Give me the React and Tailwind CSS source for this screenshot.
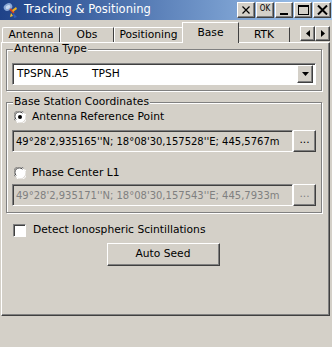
import React from "react";

const raised = "bg-[#d4d0c8] border border-t-white border-l-white border-r-[#404040] border-b-[#404040] shadow-[inset_-1px_-1px_0_#808080]";
const sunken = "border border-t-[#808080] border-l-[#808080] border-r-white border-b-white shadow-[inset_1px_1px_0_#404040]";

function TitleBtn({ children }) {
  return (
    <div className={`${raised} w-[18px] h-[16px] flex items-center justify-center text-black`}>
      {children}
    </div>
  );
}

function Radio({ checked }) {
  return (
    <svg width="12" height="12" viewBox="0 0 12 12" className="shrink-0">
      <circle cx="6" cy="6" r="5.5" fill="#fff" />
      <path d="M1.2 9.5 A5.5 5.5 0 0 1 9.5 1.2" stroke="#808080" strokeWidth="1" fill="none" />
      <path d="M2.2 8.5 A4.3 4.3 0 0 1 8.5 2.2" stroke="#404040" strokeWidth="1" fill="none" />
      <path d="M10.8 2.5 A5.5 5.5 0 0 1 2.5 10.8" stroke="#ffffff" strokeWidth="1" fill="none" />
      {checked && <circle cx="6" cy="6" r="2" fill="#000" />}
    </svg>
  );
}

function Group({ label, className, children }) {
  return (
    <div className={`relative border border-[#808080] shadow-[inset_1px_1px_0_#fff,1px_1px_0_#fff] ${className}`}>
      <div className="absolute left-[6px] top-[-7px] bg-[#d4d0c8] leading-[12px] px-[1px]">{label}</div>
      {children}
    </div>
  );
}

export default function App() {
  return (
    <div className="w-[332px] h-[347px] bg-[#d4d0c8] font-['DejaVu_Sans',sans-serif] text-[10.7px] text-black overflow-hidden flex flex-col">
      {/* Title bar */}
      <div className="h-[20px] flex items-center bg-gradient-to-r from-[#1f4288] to-[#a6caf0] pl-[2px] pr-[1px]">
        <svg width="18" height="18" viewBox="0 0 18 18" className="shrink-0">
          <ellipse cx="6" cy="6" rx="4.5" ry="3.5" fill="#8aa8d8" transform="rotate(-30 6 6)" />
          <ellipse cx="6" cy="6" rx="2.5" ry="1.8" fill="#c8d8f0" transform="rotate(-30 6 6)" />
          <path d="M8 8 L12 12" stroke="#d04020" strokeWidth="2" />
          <path d="M10 9 L14 6 L15 8 L11 11 Z" fill="#f0b020" />
          <path d="M9 12 L11 15 L8 16 Z" fill="#f0c030" />
          <path d="M11 12 L15 16 L12 17 Z" fill="#3060c0" />
        </svg>
        <span className="ml-[4px] text-white text-[11.5px] leading-none">Tracking &amp; Positioning</span>
        <div className="ml-auto flex gap-[1px]">
          <TitleBtn>
            <svg width="10" height="8" viewBox="0 0 10 8"><path d="M1.5 0.5 L8.5 7.5 M8.5 0.5 L1.5 7.5" stroke="#000" strokeWidth="1.2" /></svg>
          </TitleBtn>
          <TitleBtn>
            <span className="text-[8px] leading-none font-['DejaVu_Sans_Condensed',sans-serif] -mt-[3px]">OK</span>
          </TitleBtn>
          <TitleBtn>
            <div className="w-[8px] h-[2px] bg-black mt-[8px]" />
          </TitleBtn>
          <TitleBtn>
            <div className="w-[11px] h-[10px] border border-black border-t-2" />
          </TitleBtn>
          <TitleBtn>
            <svg width="11" height="10" viewBox="0 0 11 10"><path d="M1 0.5 L10 9.5 M10 0.5 L1 9.5" stroke="#000" strokeWidth="2" /></svg>
          </TitleBtn>
        </div>
      </div>

      {/* Tabs */}
      <div className="mt-[2px] h-[20px] flex items-end pl-[2px] relative z-10">
        <div className="w-[58px] h-[15px] border-t border-l border-white border-r border-r-[#404040] flex items-center justify-center rounded-tl-[2px]">Antenna</div>
        <div className="w-[54px] h-[15px] border-t border-l border-white border-r border-r-[#404040] flex items-center justify-center">Obs</div>
        <div className="w-[68px] h-[15px] border-t border-l border-white flex items-center justify-center">Positioning</div>
        <div className="w-[57px] h-[21px] -mb-[1px] bg-[#d4d0c8] border-t border-l border-white border-r border-r-[#404040] flex items-start justify-center pt-[2px]">Base</div>
        <div className="w-[51px] h-[15px] border-t border-white border-r border-r-[#404040] flex items-center justify-center">RTK</div>
        <div className="ml-auto mr-[2px] flex self-start mt-[4px]">
          <div className={`${raised} w-[15px] h-[15px] flex items-center justify-center`}>
            <svg width="4" height="7" viewBox="0 0 4 7"><path d="M4 0 L0 3.5 L4 7 Z" fill="#000" /></svg>
          </div>
          <div className={`${raised} w-[15px] h-[15px] flex items-center justify-center`}>
            <svg width="4" height="7" viewBox="0 0 4 7"><path d="M0 0 L4 3.5 L0 7 Z" fill="#000" /></svg>
          </div>
        </div>
      </div>

      {/* Panel */}
      <div className="ml-[1px] w-[329px] h-[274px] border border-t-white border-l-white border-r-[#404040] border-b-[#404040] shadow-[inset_-1px_-1px_0_#808080] flex flex-col pl-[4px] pr-[7px]">
        <Group label="Antenna Type" className="mt-[6px] h-[42px] px-[5px] pt-[13px]">
          <div className={`${sunken} bg-white h-[22px] flex items-center pl-[4px] pr-[2px]`}>
            <span className="w-[75px]">TPSPN.A5</span>
            <span>TPSH</span>
            <div className={`${raised} ml-auto w-[16px] h-[18px] flex items-center justify-center`}>
              <svg width="7" height="4" viewBox="0 0 7 4"><path d="M0 0 L7 0 L3.5 4 Z" fill="#000" /></svg>
            </div>
          </div>
        </Group>

        <Group label="Base Station Coordinates" className="mt-[11px] h-[111px] px-[5px]">
          <div className="mt-[7px] h-[14px] flex items-center gap-[6px] pl-[2px]">
            <Radio checked />
            <span>Antenna Reference Point</span>
          </div>
          <div className="mt-[6px] h-[22px] flex">
            <div className={`${sunken} flex-1 min-w-0 flex items-center pl-[3px] whitespace-nowrap overflow-hidden text-[10px]`}>
              49°28'2,935165''N; 18°08'30,157528''E; 445,5767m
            </div>
            <div className={`${raised} w-[23px] h-[22px] shrink-0 flex items-center justify-center pb-[2px]`}>...</div>
          </div>
          <div className="mt-[14px] h-[14px] flex items-center gap-[6px] pl-[2px]">
            <Radio />
            <span>Phase Center L1</span>
          </div>
          <div className="mt-[4px] h-[22px] flex">
            <div className={`${sunken} flex-1 min-w-0 flex items-center pl-[3px] whitespace-nowrap overflow-hidden text-[10px] text-[#808080]`}>
              49°28'2,935171''N; 18°08'30,157543''E; 445,7933m
            </div>
            <div className={`${raised} w-[23px] h-[22px] shrink-0 flex items-center justify-center pb-[2px] text-[#808080]`}>...</div>
          </div>
        </Group>

        <div className="mt-[11px] h-[13px] flex items-center gap-[7px] pl-[7px]">
          <div className={`${sunken} bg-white w-[13px] h-[13px] shrink-0`} />
          <span>Detect Ionospheric Scintillations</span>
        </div>

        <div className="mt-[6px] flex justify-center pr-[2px]">
          <div className={`${raised} w-[113px] h-[23px] flex items-center justify-center`}>Auto Seed</div>
        </div>
      </div>
    </div>
  );
}
